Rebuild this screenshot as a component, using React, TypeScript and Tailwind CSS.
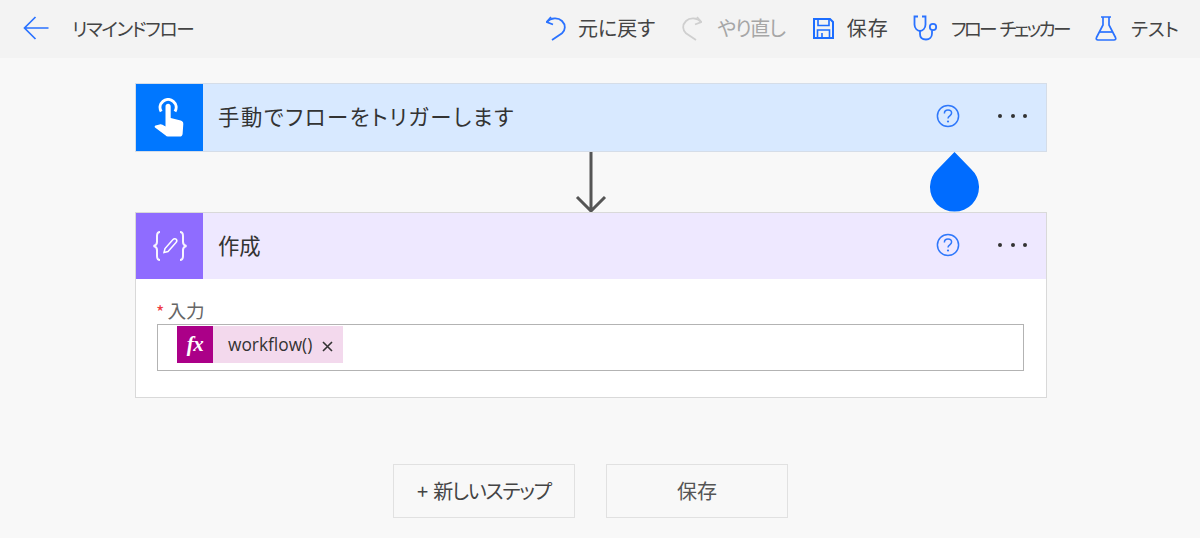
import React from "react";

const jp = "font-['Noto_Sans_CJK_JP','Noto_Sans',sans-serif] [font-feature-settings:'palt']";

function ToolItem({ icon, label, className, textClass }: { icon: React.ReactNode; label: string; className: string; textClass: string }) {
  return (
    <div className={`flex items-center ${className}`}>
      {icon}
      <span className={`leading-none whitespace-nowrap ${textClass}`}>{label}</span>
    </div>
  );
}

function HelpIcon() {
  return (
    <svg width="24" height="24" viewBox="0 0 24 24" fill="none" className="shrink-0">
      <circle cx="12" cy="12" r="10.600" stroke="#2f78fb" strokeWidth="1.500" />
      <path d="M8.400 9.400c0-2.100 1.600-3.400 3.600-3.400s3.600 1.300 3.600 3.100c0 2.700-3.600 2.700-3.600 5.400" stroke="#2f78fb" strokeWidth="1.500" />
      <circle cx="12" cy="17.500" r="1.100" fill="#2f78fb" />
    </svg>
  );
}

function Dots() {
  return (
    <div className="flex items-center gap-[8.5px] shrink-0">
      <span className="w-[4px] h-[4px] rounded-full bg-[#333]" />
      <span className="w-[4px] h-[4px] rounded-full bg-[#333]" />
      <span className="w-[4px] h-[4px] rounded-full bg-[#333]" />
    </div>
  );
}

function CardHeader({ bg, tile, icon, title, titleClass, heightClass }: { bg: string; tile: string; icon: React.ReactNode; title: string; titleClass: string; heightClass: string }) {
  return (
    <div className={`flex items-stretch ${heightClass} ${bg}`}>
      <div className={`w-[67px] flex items-center justify-center shrink-0 ${tile}`}>{icon}</div>
      <div className="flex-1 flex items-center pb-[3px]">
        <span className={`text-[21.33px] leading-none text-[#333] whitespace-nowrap ${titleClass}`}>{title}</span>
        <div className="ml-auto flex items-center">
          <HelpIcon />
          <div className="ml-[38px] mr-[19px]"><Dots /></div>
        </div>
      </div>
    </div>
  );
}

export default function App() {
  return (
    <div className={`w-[1200px] h-[538px] overflow-hidden bg-[#f8f8f8] ${jp}`}>
      <header className="h-[58px] bg-[#f3f3f3] flex items-center pb-[2px]">
        <svg width="26" height="24" viewBox="0 0 26 24" fill="none" className="ml-[23px] shrink-0">
          <path d="M1.500 12H25.500M12.500 1 1.500 12l11 11" stroke="#2a72ff" strokeWidth="1.700" />
        </svg>
        <span className="ml-[23px] text-[18.67px] leading-none text-[#444] whitespace-nowrap tracking-[-1.3px]">リマインドフロー</span>

        <div className="ml-auto flex items-center pr-[21px]">
          <ToolItem
            className="mr-[27px]"
            textClass="text-[20px] text-[#444]"
            label="元に戻す"
            icon={
              <svg width="20" height="26" viewBox="0 0 20 26" fill="none" className="mr-[12px] shrink-0">
                <path d="M5 2 .800 7 7 9.500" stroke="#2a72ff" strokeWidth="1.800" />
                <path d="M.800 7C5 2.500 12 2 16 6c4 4 3.500 9 0 12.300L6 25" stroke="#2a72ff" strokeWidth="1.800" />
              </svg>
            }
          />
          <ToolItem
            className="mr-[28px]"
            textClass="text-[20px] text-[#a6a6a6] tracking-[-1.2px]"
            label="やり直し"
            icon={
              <svg width="20" height="26" viewBox="0 0 20 26" fill="none" className="mr-[15px] shrink-0">
                <path d="M15 2l4.200 5L13 9.500" stroke="#cfcfcf" strokeWidth="1.800" />
                <path d="M19.200 7C15 2.500 8 2 4 6c-4 4-3.500 9 0 12.300L14 25" stroke="#cfcfcf" strokeWidth="1.800" />
              </svg>
            }
          />
          <ToolItem
            className="mr-[24px]"
            textClass="text-[20px] text-[#444] tracking-[1px]"
            label="保存"
            icon={
              <svg width="21" height="21" viewBox="0 0 21 21" fill="none" className="mr-[13px] shrink-0">
                <path d="M1 1h16l3 3v16H1z" stroke="#1c6dff" strokeWidth="2" />
                <path d="M5 1.500v6h11v-6M4.500 20v-8h12v8M9 15v5" stroke="#1c6dff" strokeWidth="1.600" />
              </svg>
            }
          />
          <ToolItem
            className="mr-[26px]"
            textClass="text-[18.67px] text-[#444] tracking-[-2.65px] [word-spacing:3px]"
            label="フロー チェッカー"
            icon={
              <svg width="25" height="26" viewBox="0 0 25 26" fill="none" className="mr-[13px] shrink-0">
                <path d="M5 1.500H1.500v8c0 4 3 6.500 5.500 6.500s5.500-2.500 5.500-6.500v-8H9" stroke="#2a72ff" strokeWidth="1.800" />
                <path d="M7 16v3c0 3.500 2.500 5.500 6 5.500s6-2.500 6-6v-3" stroke="#2a72ff" strokeWidth="1.800" />
                <circle cx="20" cy="12" r="3.200" stroke="#2a72ff" strokeWidth="1.800" />
              </svg>
            }
          />
          <ToolItem
            className=""
            textClass="text-[18.67px] text-[#444]"
            label="テスト"
            icon={
              <svg width="22" height="25" viewBox="0 0 22 25" fill="none" className="mr-[14px] shrink-0">
                <path d="M6 1h10M8 1v8L1.500 21.500c-.7 1.500 0 2.500 1.500 2.500h16c1.500 0 2.200-1 1.500-2.500L14 9V1" stroke="#2a72ff" strokeWidth="1.700" />
                <path d="M5 16h12" stroke="#2a72ff" strokeWidth="1.700" />
              </svg>
            }
          />
        </div>
      </header>

      <main className="w-[912px] ml-[135px] pt-[25px]">
        <div className="border border-[#d5dde8]">
          <CardHeader
            heightClass="h-[67px]"
            bg="bg-[#d8e9ff]"
            tile="bg-[#0077ff]"
            title="手動でフローをトリガーします"
            titleClass="ml-[15px] tracking-[1.65px]"
            icon={
              <svg width="34" height="40" viewBox="0 0 34 40" className="shrink-0">
                <path d="M8.200 13.500A8 8 0 1 1 22 13.500" fill="none" stroke="#fff" strokeWidth="3" />
                <path d="M12.500 8.500c0-1.600 1.100-2.700 2.600-2.700s2.600 1.100 2.600 2.700V20l10 2.600c1.600.4 2.600 1.600 2.600 3.300l-.7 10c-.2 1.600-1.300 2.600-2.900 2.600H15c-1 0-1.900-.4-2.600-1.200L2 29.500c-.6-.7-.3-1.700.6-2l4-1.100c1-.3 2-.1 2.900.4l3 1.700z" fill="#fff" />
              </svg>
            }
          />
        </div>

        <div className="h-[60px] relative flex justify-center">
          <svg width="32" height="60" viewBox="0 0 32 60" fill="none" className="shrink-0">
            <path d="M16 0v59M2 45l14 14 14-14" stroke="#555" strokeWidth="3" />
          </svg>
          <svg width="49" height="60" viewBox="0 0 49 60" className="absolute left-[795px] top-0">
            <path d="M24.500 0 41 17A24.500 24.500 0 1 1 8 17Z" fill="#006cff" />
          </svg>
        </div>

        <div className="border border-[#d9d9d9] bg-white">
          <CardHeader
            heightClass="h-[66px]"
            bg="bg-[#eee8ff]"
            tile="bg-[#8f6cff]"
            title="作成"
            titleClass="ml-[15px]"
            icon={
              <svg width="36" height="32" viewBox="0 0 36 32" fill="none" className="shrink-0">
                <path d="M8 2C5 2 5 4 5 6v6c0 2-1 3.500-3.500 4C4 16.500 5 18 5 20v6c0 2 0 4 3 4M28 2c3 0 3 2 3 4v6c0 2 1 3.500 3.500 4-2.500.5-3.500 2-3.500 4v6c0 2 0 4-3 4" stroke="#f6f3ff" strokeWidth="2" />
                <path d="M12 22.500l1-4 8-9c1-1 2.500-1 3.200-.2s.8 2.200-.2 3.200l-8 9z" stroke="#fff" strokeWidth="1.500" />
              </svg>
            }
          />
          <div className="h-[118px] pl-[20px] pr-[22px] pt-[20px]">
            <div className="flex items-center h-[23px] leading-none">
              <span className="text-[#ee3b44] text-[18px] mr-[3px]">*</span>
              <span className="text-[18.67px] text-[#666]">入力</span>
            </div>
            <div className="mt-[2px] ml-[1px] h-[47px] border border-[#b3b3b3] bg-white flex items-start pt-[1px] pl-[19px]">
              <div className="flex items-center h-[37px] bg-[#f3d9ed]">
                <div className="w-[36px] h-full bg-[#ab0088] flex items-center justify-center text-white text-[21px] italic font-bold font-['Liberation_Serif',serif]">
                  <span className="tracking-[-0.5px]">fx</span>
                </div>
                <span className="ml-[15px] text-[17.33px] leading-none text-[#333] font-['Open_Sans','Noto_Sans',sans-serif] tracking-[0px]">workflow()</span>
                <svg width="11" height="11" viewBox="0 0 11 11" fill="none" className="ml-[10px] mr-[10px] shrink-0 mt-[3px]">
                  <path d="M1 1l9 9M10 1 1 10" stroke="#333" strokeWidth="1.600" />
                </svg>
              </div>
            </div>
          </div>
        </div>

        <div className="mt-[66px] flex justify-center gap-[31px] pr-[1px]">
          <button className="w-[182px] h-[54px] pb-[1px] border border-[#e1e1e1] text-[20px] leading-none text-[#444] whitespace-nowrap tracking-[-1.2px] [word-spacing:3px]">+ 新しいステップ</button>
          <button className="w-[182px] h-[54px] pb-[1px] border border-[#e1e1e1] text-[20px] leading-none text-[#555]">保存</button>
        </div>
      </main>
    </div>
  );
}
